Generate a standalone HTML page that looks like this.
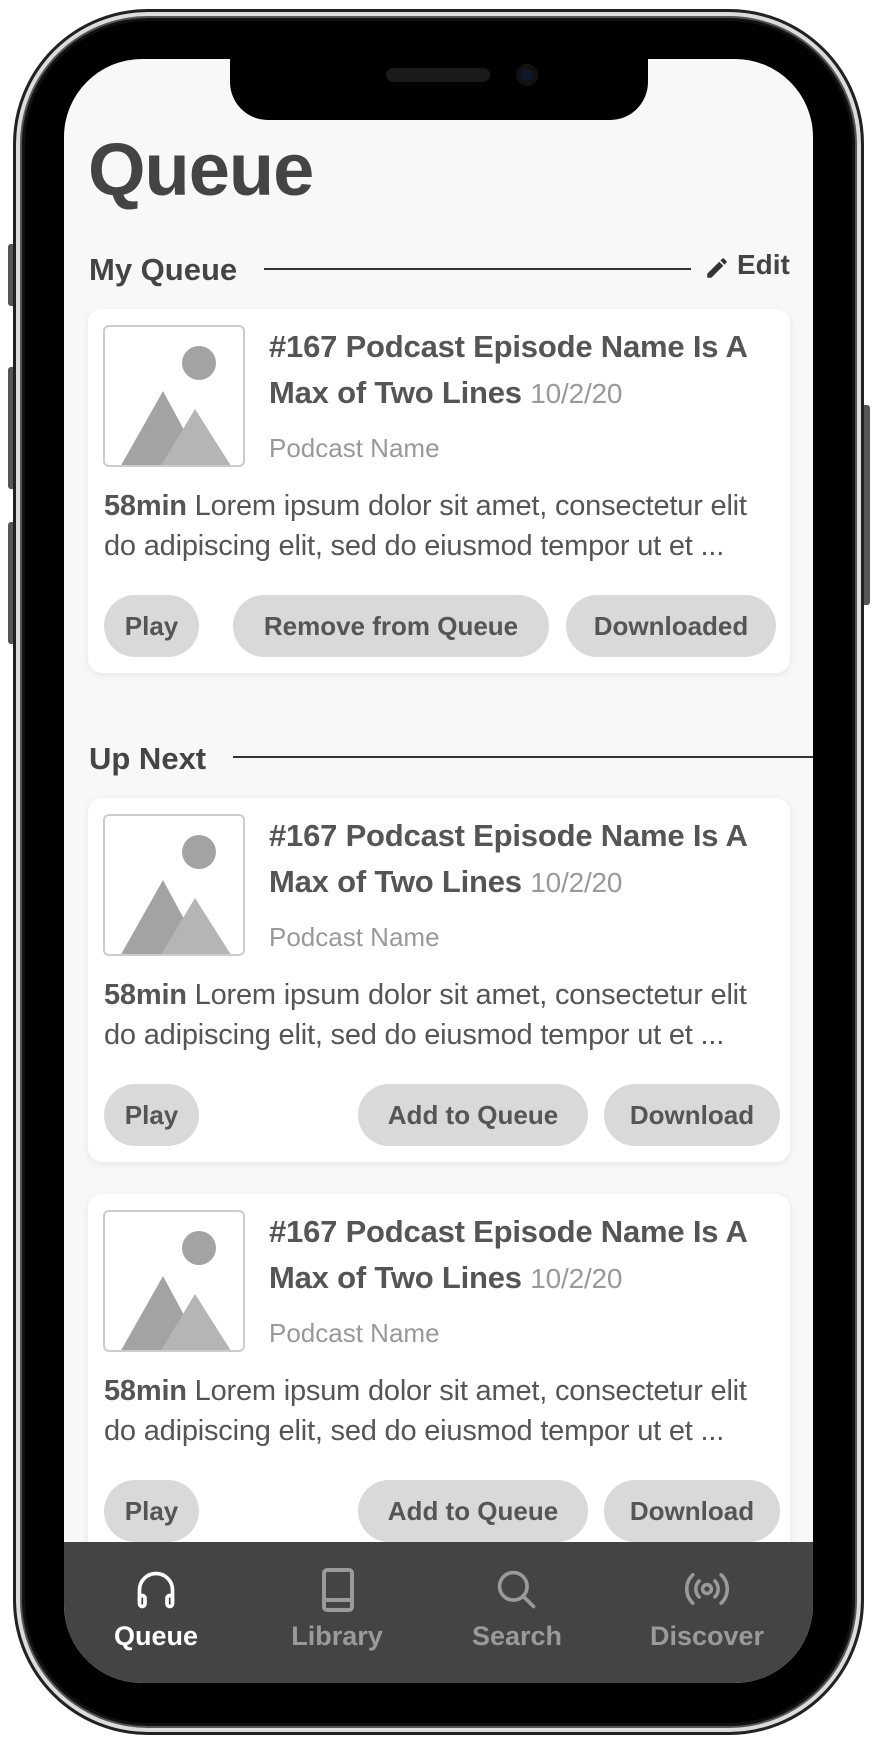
<!DOCTYPE html>
<html><head><meta charset="utf-8"><style>
*{margin:0;padding:0;box-sizing:border-box}
body{width:878px;height:1744px;background:#fff;position:relative;overflow:hidden;font-family:"Liberation Sans",sans-serif}
.abs{position:absolute}
.phone{left:13px;top:9px;width:851px;height:1726px;border-radius:135px;background:#000;border:3px solid #222;box-shadow:inset 0 0 0 4px #dcdcdc,inset 0 0 0 6px #555,inset 0 0 0 9px #111}
.screen{left:64px;top:59px;width:749px;height:1624px;border-radius:78px;background:#f8f8f8;overflow:hidden}
.notch{left:166px;top:-5px;width:418px;height:66px;background:#000;border-radius:0 0 38px 38px}
.card{position:absolute;left:24px;width:702px;height:364px;background:#fff;border-radius:14px;box-shadow:0 2px 8px rgba(0,0,0,.08)}
.thumb{position:absolute;left:15px;top:16px;width:142px;height:142px;border:2px solid #ccc;border-radius:6px;overflow:hidden;background:#fff}
.t{position:absolute;left:181px;font-weight:bold;color:#555;font-size:31px;white-space:nowrap;letter-spacing:-0.2px}
.t span{font-weight:normal;color:#999;font-size:28px}
.pn{position:absolute;left:181px;color:#999;font-size:26px;white-space:nowrap}
.d{position:absolute;left:16px;color:#555;font-size:29px;white-space:nowrap;letter-spacing:-0.2px}
.b{position:absolute;top:286px;height:62px;border-radius:31px;background:#d9d9d9;color:#555;font-size:26px;font-weight:bold;text-align:center;line-height:62px;white-space:nowrap}
.hdr{position:absolute;left:25px;font-size:31px;font-weight:bold;color:#444;white-space:nowrap}
.lbl{position:absolute;font-size:27px;font-weight:bold;color:#9a9a9a;text-align:center;width:160px}
</style></head><body>
<div class="abs" style="left:8px;top:244px;width:8px;height:62px;background:#555;border-radius:3px"></div>
<div class="abs" style="left:8px;top:367px;width:8px;height:122px;background:#555;border-radius:3px"></div>
<div class="abs" style="left:8px;top:522px;width:8px;height:122px;background:#555;border-radius:3px"></div>
<div class="abs" style="left:862px;top:405px;width:8px;height:200px;background:#555;border-radius:3px"></div>
<div class="abs phone"></div>
<div class="abs screen">
  <div class="abs notch">
    <div class="abs" style="left:156px;top:14px;width:104px;height:14px;border-radius:7px;background:#1a1a1a"></div>
    <div class="abs" style="left:286px;top:10px;width:22px;height:22px;border-radius:50%;background:#0d1a2a;box-shadow:inset 0 0 0 5px #111"></div>
  </div>
  <div class="abs" style="left:24px;top:68px;font-size:74px;font-weight:bold;color:#444;letter-spacing:-1px">Queue</div>
  <div class="hdr" style="top:193px">My Queue</div>
  <div class="abs" style="left:200px;top:209px;width:427px;height:2px;background:#333"></div>
  <svg class="abs" style="left:640px;top:196px" width="26" height="26" viewBox="0 0 24 24"><path d="M3 17.25V21h3.75L17.81 9.94l-3.75-3.75L3 17.25zM20.71 7.04a1 1 0 000-1.41l-2.34-2.34a1 1 0 00-1.41 0l-1.830 1.83 3.75 3.75 1.83-1.83z" fill="#333"/></svg>
  <div class="abs" style="left:673px;top:190px;font-size:28px;font-weight:bold;color:#444">Edit</div>

  <div class="card" style="top:250px">
    <div class="thumb"><svg width="142" height="142" viewBox="0 0 142 142"><circle cx="94" cy="36" r="17" fill="#a3a3a3"/><polygon points="14,142 58,64 100,142" fill="#a3a3a3"/><polygon points="54,142 90,82 128,142" fill="#b5b5b5"/></svg></div>
    <div class="t" style="top:20px">#167 Podcast Episode Name Is A</div>
    <div class="t" style="top:66px">Max of Two Lines <span>10/2/20</span></div>
    <div class="pn" style="top:124px">Podcast Name</div>
    <div class="d" style="top:181px"><b>58min</b> Lorem ipsum dolor sit amet, consectetur elit</div>
    <div class="d" style="top:221px">do adipiscing elit, sed do eiusmod tempor ut et ...</div>
    <div class="b" style="left:16px;width:95px">Play</div>
    <div class="b" style="left:145px;width:316px">Remove from Queue</div>
    <div class="b" style="left:478px;width:210px">Downloaded</div>
  </div>

  <div class="hdr" style="top:682px">Up Next</div>
  <div class="abs" style="left:169px;top:697px;width:600px;height:2px;background:#333"></div>

  <div class="card" style="top:739px">
    <div class="thumb"><svg width="142" height="142" viewBox="0 0 142 142"><circle cx="94" cy="36" r="17" fill="#a3a3a3"/><polygon points="14,142 58,64 100,142" fill="#a3a3a3"/><polygon points="54,142 90,82 128,142" fill="#b5b5b5"/></svg></div>
    <div class="t" style="top:20px">#167 Podcast Episode Name Is A</div>
    <div class="t" style="top:66px">Max of Two Lines <span>10/2/20</span></div>
    <div class="pn" style="top:124px">Podcast Name</div>
    <div class="d" style="top:181px"><b>58min</b> Lorem ipsum dolor sit amet, consectetur elit</div>
    <div class="d" style="top:221px">do adipiscing elit, sed do eiusmod tempor ut et ...</div>
    <div class="b" style="left:16px;width:95px">Play</div>
    <div class="b" style="left:270px;width:230px">Add to Queue</div>
    <div class="b" style="left:516px;width:176px">Download</div>
  </div>

  <div class="card" style="top:1135px">
    <div class="thumb"><svg width="142" height="142" viewBox="0 0 142 142"><circle cx="94" cy="36" r="17" fill="#a3a3a3"/><polygon points="14,142 58,64 100,142" fill="#a3a3a3"/><polygon points="54,142 90,82 128,142" fill="#b5b5b5"/></svg></div>
    <div class="t" style="top:20px">#167 Podcast Episode Name Is A</div>
    <div class="t" style="top:66px">Max of Two Lines <span>10/2/20</span></div>
    <div class="pn" style="top:124px">Podcast Name</div>
    <div class="d" style="top:181px"><b>58min</b> Lorem ipsum dolor sit amet, consectetur elit</div>
    <div class="d" style="top:221px">do adipiscing elit, sed do eiusmod tempor ut et ...</div>
    <div class="b" style="left:16px;width:95px">Play</div>
    <div class="b" style="left:270px;width:230px">Add to Queue</div>
    <div class="b" style="left:516px;width:176px">Download</div>
  </div>

  <div class="abs" style="top:1483px;left:0;width:749px;height:141px;background:#444">
    <svg class="abs" style="left:70px;top:26px" width="44" height="44" viewBox="0 0 24 24" fill="none" stroke="#fff" stroke-width="2" stroke-linecap="round"><path d="M3 18v-6a9 9 0 0118 0v6"/><rect x="3" y="15" width="3" height="6" rx="1.5"/><rect x="18" y="15" width="3" height="6" rx="1.5"/></svg>
    <svg class="abs" style="left:252px;top:24px" width="44" height="48" viewBox="0 0 22 24" fill="none" stroke="#9a9a9a" stroke-width="2"><rect x="4" y="2" width="14" height="20" rx="1.5"/><line x1="4" y1="17" x2="18" y2="17"/></svg>
    <svg class="abs" style="left:431px;top:26px" width="44" height="44" viewBox="0 0 24 24" fill="none" stroke="#9a9a9a" stroke-width="2" stroke-linecap="round"><circle cx="10" cy="10" r="7.5"/><line x1="15.5" y1="15.5" x2="21" y2="21"/></svg>
    <svg class="abs" style="left:620px;top:27px" width="46" height="40" viewBox="0 0 26 22" fill="none" stroke="#9a9a9a" stroke-width="2" stroke-linecap="round"><circle cx="13" cy="11" r="2.5"/><path d="M8.5 6.5a6.5 6.5 0 000 9M17.5 6.5a6.5 6.5 0 010 9M5 3a11 11 0 000 16M21 3a11 11 0 010 16"/></svg>
    <div class="lbl" style="left:12px;top:79px;color:#fff">Queue</div>
    <div class="lbl" style="left:193px;top:79px">Library</div>
    <div class="lbl" style="left:373px;top:79px">Search</div>
    <div class="lbl" style="left:563px;top:79px">Discover</div>
  </div>
</div>
</body></html>
